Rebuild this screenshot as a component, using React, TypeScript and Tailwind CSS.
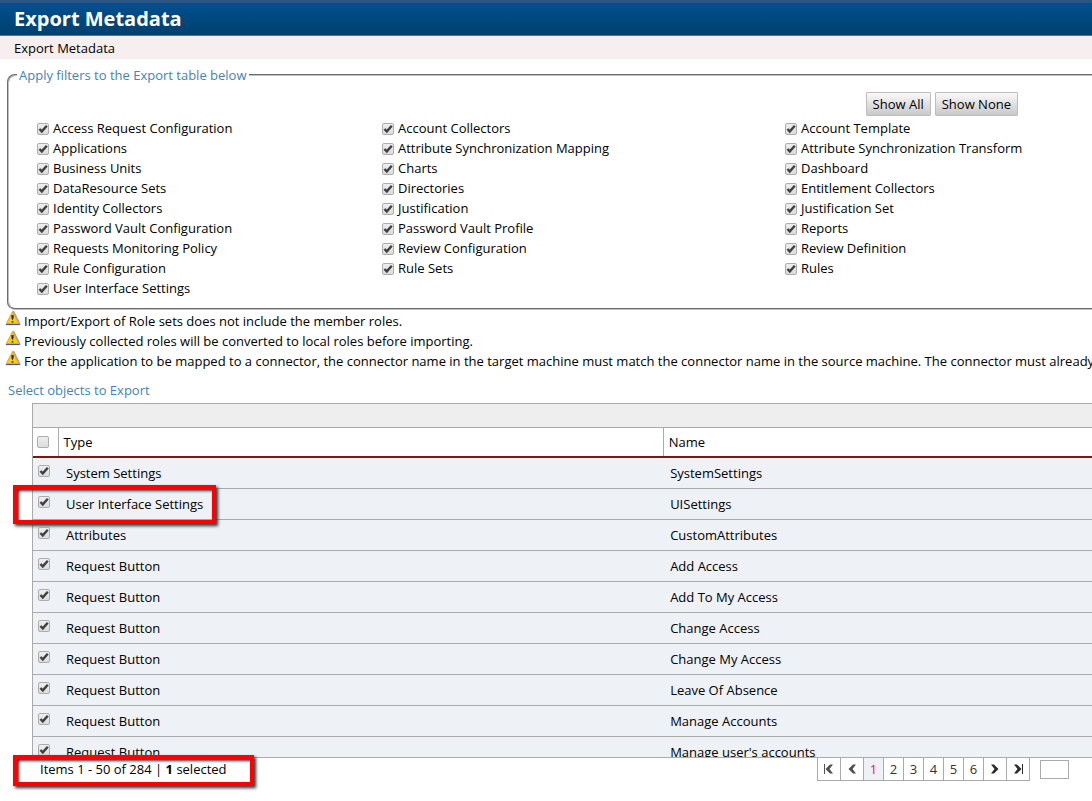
import React from "react";

const filters = [
  "Access Request Configuration", "Account Collectors", "Account Template",
  "Applications", "Attribute Synchronization Mapping", "Attribute Synchronization Transform",
  "Business Units", "Charts", "Dashboard",
  "DataResource Sets", "Directories", "Entitlement Collectors",
  "Identity Collectors", "Justification", "Justification Set",
  "Password Vault Configuration", "Password Vault Profile", "Reports",
  "Requests Monitoring Policy", "Review Configuration", "Review Definition",
  "Rule Configuration", "Rule Sets", "Rules",
  "User Interface Settings",
];

const warnings = [
  "Import/Export of Role sets does not include the member roles.",
  "Previously collected roles will be converted to local roles before importing.",
  "For the application to be mapped to a connector, the connector name in the target machine must match the connector name in the source machine. The connector must already exist.",
];

const rows = [
  ["System Settings", "SystemSettings"],
  ["User Interface Settings", "UISettings"],
  ["Attributes", "CustomAttributes"],
  ["Request Button", "Add Access"],
  ["Request Button", "Add To My Access"],
  ["Request Button", "Change Access"],
  ["Request Button", "Change My Access"],
  ["Request Button", "Leave Of Absence"],
  ["Request Button", "Manage Accounts"],
  ["Request Button", "Manage user's accounts"],
];

function Check({ id, checked = true, label }: { id?: string; checked?: boolean; label?: string }) {
  return (
    <span className="relative block size-3 shrink-0">
      <input
        id={id}
        type="checkbox"
        defaultChecked={checked}
        aria-label={label}
        className="peer block size-3 appearance-none rounded-[2px] border border-[#adadad] bg-linear-to-b from-[#eeeeee] to-[#dcdcdc]"
      />
      <svg viewBox="0 0 12 12" className="pointer-events-none absolute inset-0 hidden size-3 peer-checked:block" aria-hidden="true">
        <path d="M2.4 6 4.8 8.4 9.8 2.8" fill="none" stroke="#404040" strokeWidth="2.4" />
      </svg>
    </span>
  );
}

function Warning() {
  return (
    <svg viewBox="0 0 16 16" className="size-4 shrink-0" aria-hidden="true">
      <path d="M8.6 1.6 14.8 14.2H2Z" fill="#a3a3b3" stroke="#a3a3b3" strokeWidth="1.6" strokeLinejoin="round" />
      <path d="M7.5 1.6 13.6 13.5H1.4Z" fill="#ffcf0a" stroke="#e8a92c" strokeWidth="1" strokeLinejoin="round" />
      <path d="M.8 14.6H14.6" stroke="#4d4a94" strokeWidth="1" />
      <path d="M6.4 5H8.6V7.4L8 9.8H7L6.4 7.4Z" fill="#24264f" />
      <rect x="6.7" y="11" width="1.6" height="1.6" fill="#24264f" />
    </svg>
  );
}

function Arrow({ back = false, bar = false }: { back?: boolean; bar?: boolean }) {
  const color = back ? "#505050" : "#2b2b2b";
  return (
    <svg viewBox="0 0 12 12" className={back ? "size-3 -scale-x-100" : "size-3"} aria-hidden="true">
      <path d="M2 1.5H5L9.5 6 5 10.5H2L5.5 6Z" fill={color} />
      {bar && <path d="M10.5 1V11" stroke={color} strokeWidth="1" />}
    </svg>
  );
}

const action = "h-6 rounded-[1px] border border-[#bdbdbd] bg-linear-to-b from-[#fbf9fa] to-[#c9c9c9] px-1.5 leading-5";
const page = "-ml-px flex h-6 items-center justify-center border border-[#aaaaaa]";
const marker = "pointer-events-none absolute border-4 border-[#ff0000] shadow-[2px_2px_3px_#333,inset_2px_2px_3px_#333]";

export default function App() {
  return (
    <main className="min-h-screen overflow-hidden bg-white font-['Open_Sans',sans-serif] text-[13px] leading-5 text-black">
      <header className="h-9 border-t-3 border-b border-t-[#2b567f] border-b-[#1792ae] bg-linear-to-b from-[#00508f] to-[#00406f] pl-[14px]">
        <h1 className="text-xl leading-8 font-bold text-white">Export Metadata</h1>
      </header>
      <nav className="h-[23px] bg-[#f7eeef] pl-[14px] leading-6">Export Metadata</nav>

      <fieldset className="mt-[6px] ml-[7px] h-[245px] rounded-l-lg border-2 border-r-0 border-[#c0c0c0] [border-style:groove] pr-5 pl-7">
        <legend className="-ml-5 px-[2px] text-[#4682b4]">Apply filters to the Export table below</legend>
        <div className="mt-[7px] flex justify-end gap-1 pr-[54px]">
          <button className={action}>Show All</button>
          <button className={action}>Show None</button>
        </div>
        <div className="mt-[2px] grid grid-cols-[345px_403px_1fr]">
          {filters.map((name, i) => (
            <label key={name} htmlFor={`filter-${i}`} className="flex h-5 items-end gap-1 whitespace-nowrap">
              <span className="pb-[3px]"><Check id={`filter-${i}`} /></span>
              {name}
            </label>
          ))}
        </div>
      </fieldset>

      <ul className="ml-[5px]">
        {warnings.map((text) => (
          <li key={text} className="flex h-5 gap-[3px] whitespace-nowrap">
            <Warning />
            <span className="pt-px">{text}</span>
          </li>
        ))}
      </ul>

      <h2 className="mt-[10px] ml-2 text-[#4682b4]">Select objects to Export</h2>

      <section className="mt-[3px] ml-8">
        <div className="-ml-8 h-[354px] overflow-hidden pl-8">
          <div className="border-t border-l border-[#aaaaaa]">
            <div className="h-6 border-b border-[#aaaaaa] bg-[#eeeeee]" />
            <table className="w-full table-fixed border-collapse text-left">
              <colgroup>
                <col className="w-[25px]" />
                <col className="w-4/7" />
                <col />
              </colgroup>
              <thead>
                <tr className="h-[29px] border-b-2 border-[#7d1416]">
                  <th className="border-r border-[#aaaaaa] pl-1"><Check checked={false} label="Select all" /></th>
                  <th className="border-r border-[#aaaaaa] pl-[5px] font-normal">Type</th>
                  <th className="pl-[5px] font-normal">Name</th>
                </tr>
              </thead>
              <tbody>
                {rows.map(([type, name], i) => (
                  <tr key={name} className="h-[31px] border-b border-[#aaaaaa] bg-[#eef1f6]">
                    <td className="pb-1 pl-[5px]"><Check label={`Select ${name}`} /></td>
                    <td className="pl-2">
                      {i === 1 ? (
                        <span className="relative">
                          {type}
                          <span className={`${marker} -top-[10px] -right-[13px] -left-[53px] h-[39px]`} />
                        </span>
                      ) : type}
                    </td>
                    <td className="pl-[7px]">{name}</td>
                  </tr>
                ))}
              </tbody>
            </table>
          </div>
        </div>

        <footer className="flex items-start justify-between border-t border-[#aaaaaa] pr-[23px]">
          <p className="relative pt-px pl-2">
            Items 1 - 50 of 284 | <b>1</b> selected
            <span className={`${marker} -top-[3px] -right-[27px] -left-[19px] h-[31px]`} />
          </p>
          <nav aria-label="Pages" className="-mt-px flex text-[#333333]">
            <button aria-label="First page" className={`${page} w-6`}><Arrow back bar /></button>
            <button aria-label="Previous page" className={`${page} w-6`}><Arrow back /></button>
            {[1, 2, 3, 4, 5, 6].map((n) => (
              <button key={n} className={`${page} w-[21px] ${n === 1 ? "bg-[#eef1f6] text-[#ee1c25]" : ""}`}>{n}</button>
            ))}
            <button aria-label="Next page" className={`${page} w-6`}><Arrow /></button>
            <button aria-label="Last page" className={`${page} w-6`}><Arrow bar /></button>
            <input aria-label="Go to page" className="mt-[3px] ml-[10px] h-[19px] w-[29px] border border-[#aaaaaa]" />
          </nav>
        </footer>
      </section>
    </main>
  );
}
